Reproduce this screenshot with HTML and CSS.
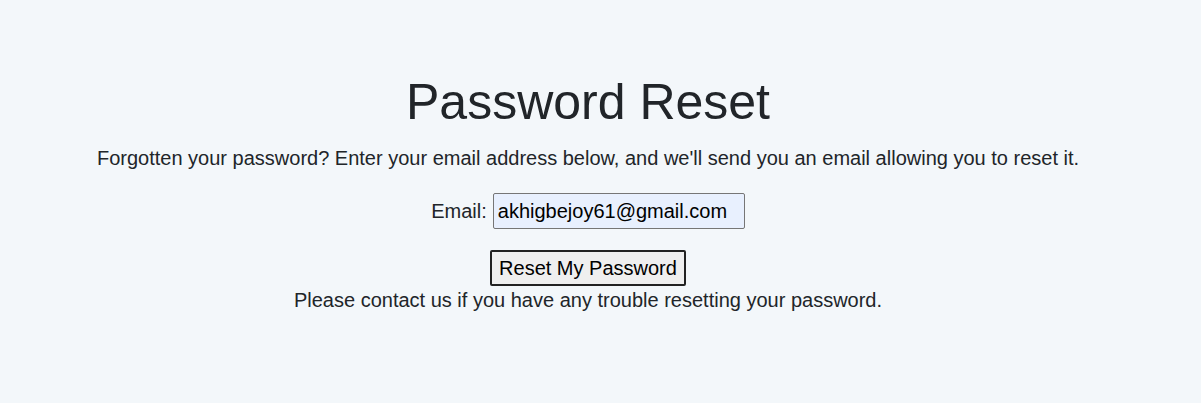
FILE: index.html
```html
<!DOCTYPE html>
<html>
<head>
<meta charset="utf-8">
<link rel="stylesheet" href="styles.css">
</head>
<body>
<main class="reset">
  <h1 class="title">Password Reset</h1>
  <p class="lead">Forgotten your password? Enter your email address below, and we'll send you an email allowing you to reset it.</p>
  <form class="form">
    <div class="field">
      <label class="label" for="email">Email:</label>
      <input class="input" id="email" type="email" value="akhigbejoy61@gmail.com">
    </div>
    <button class="btn" type="button">Reset My Password</button>
  </form>
  <p class="note">Please contact us if you have any trouble resetting your password.</p>
</main>
</body>
</html>
```
FILE: styles.css
```css
html, body {
  margin: 0;
  padding: 0;
  background: #f3f7fa;
}
body {
  font-family: "Liberation Sans", Arial, sans-serif;
  color: #212529;
  font-size: 20px;
}
.reset {
  display: flex;
  flex-direction: column;
  align-items: center;
  padding: 72px 25px 0 0;
  text-align: center;
}
.title {
  margin: 0;
  font-size: 50px;
  font-weight: 400;
  line-height: 60px;
}
.lead {
  margin: 15px 0 0;
  line-height: 23px;
}
.form {
  display: flex;
  flex-direction: column;
  align-items: center;
  margin-top: 23px;
}
.field {
  display: flex;
  align-items: center;
  gap: 6px;
}
.label {
  line-height: 23px;
}
.input {
  width: 252px;
  height: 36px;
  box-sizing: border-box;
  border: 1px solid #767676;
  border-radius: 2px;
  background: #e8f0fe;
  font-family: "Liberation Sans", Arial, sans-serif;
  font-size: 20px;
  color: #000;
  padding: 0 4px;
}
.btn {
  margin-top: 21px;
  height: 36px;
  box-sizing: border-box;
  border: 2px solid #222;
  border-radius: 2px;
  background: #efefef;
  font-family: "Liberation Sans", Arial, sans-serif;
  font-size: 20px;
  color: #000;
  padding: 0 7px;
}
.note {
  margin: 3px 0 0;
  line-height: 23px;
}
```
